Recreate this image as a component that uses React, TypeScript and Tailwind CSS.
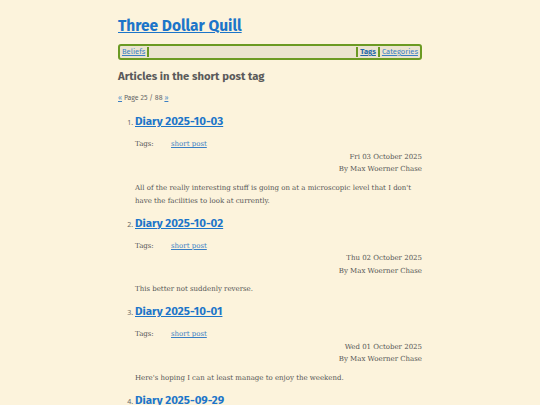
import React from "react";

const posts = [
  {
    title: "Diary 2025-10-03",
    date: "Fri 03 October 2025",
    body: "All of the really interesting stuff is going on at a microscopic level that I don't have the facilities to look at currently.",
  },
  {
    title: "Diary 2025-10-02",
    date: "Thu 02 October 2025",
    body: "This better not suddenly reverse.",
  },
  {
    title: "Diary 2025-10-01",
    date: "Wed 01 October 2025",
    body: "Here's hoping I can at least manage to enjoy the weekend.",
  },
  {
    title: "Diary 2025-09-29",
    date: "Mon 29 September 2025",
    body: "Placeholder.",
  },
];

const sans = "font-['Fira_Sans','Noto_Sans',sans-serif]";
const slab = "font-['DejaVu_Serif',serif]";

export default function App() {
  return (
    <div className="min-h-screen bg-[#fcf3dc] text-[#555]">
      <div className="w-[304px] mx-auto pt-[14px]">
        {/* Header */}
        <h1 className={`${sans} text-[15.5px] font-bold leading-[24px]`}>
          <a href="#" className="text-[#1c75c9] underline">
            Three Dollar Quill
          </a>
        </h1>

        {/* Nav */}
        <nav
          className={`${sans} mt-[6px] flex items-center h-[16px] border-2 border-[#6b9a23] rounded-[3px] bg-[#ebe4cf] text-[7.6px] px-[2px]`}
        >
          <a href="#" className="text-[#3b7fc4] underline pr-[2px] border-r-2 border-[#6b9a23] leading-[10px]">
            Beliefs
          </a>
          <div className="flex-1" />
          <a href="#" className="text-[#2467a8] font-bold underline px-[2px] border-l-2 border-r-2 border-[#6b9a23] leading-[10px]">
            Tags
          </a>
          <a href="#" className="text-[#3b7fc4] underline pl-[2px] leading-[10px]">
            Categories
          </a>
        </nav>

        <h2 className={`${sans} mt-[8px] text-[11.3px] font-bold text-[#5a5a5a] leading-[16px]`}>
          Articles in the short post tag
        </h2>

        <p className={`${sans} mt-[9px] text-[7px] text-[#666] leading-[10px]`}>
          <a href="#" className="text-[#3b7fc4] underline">«</a> Page 25 / 88{" "}
          <a href="#" className="text-[#3b7fc4] underline">»</a>
        </p>

        <ol className="mt-[4px] pl-[17px] list-decimal marker:text-[7px] marker:text-[#666]">
          {posts.map((p) => (
            <li key={p.title} className="mb-[1px]">
              <a
                href="#"
                className={`${sans} text-[11.5px] font-bold text-[#1c75c9] underline leading-[16px]`}
              >
                {p.title}
              </a>
              <div className={`${slab} text-[7px] leading-[12.5px] text-[#555]`}>
                <div className="mt-[7px] flex">
                  <span className="w-[36px]">Tags:</span>
                  <a href="#" className="text-[#3b7fc4] underline">
                    short post
                  </a>
                </div>
                <div className="text-right">{p.date}</div>
                <div className="text-right">By Max Woerner Chase</div>
                <p className="mt-[6px] leading-[13px]">{p.body}</p>
              </div>
            </li>
          ))}
        </ol>
      </div>
    </div>
  );
}
